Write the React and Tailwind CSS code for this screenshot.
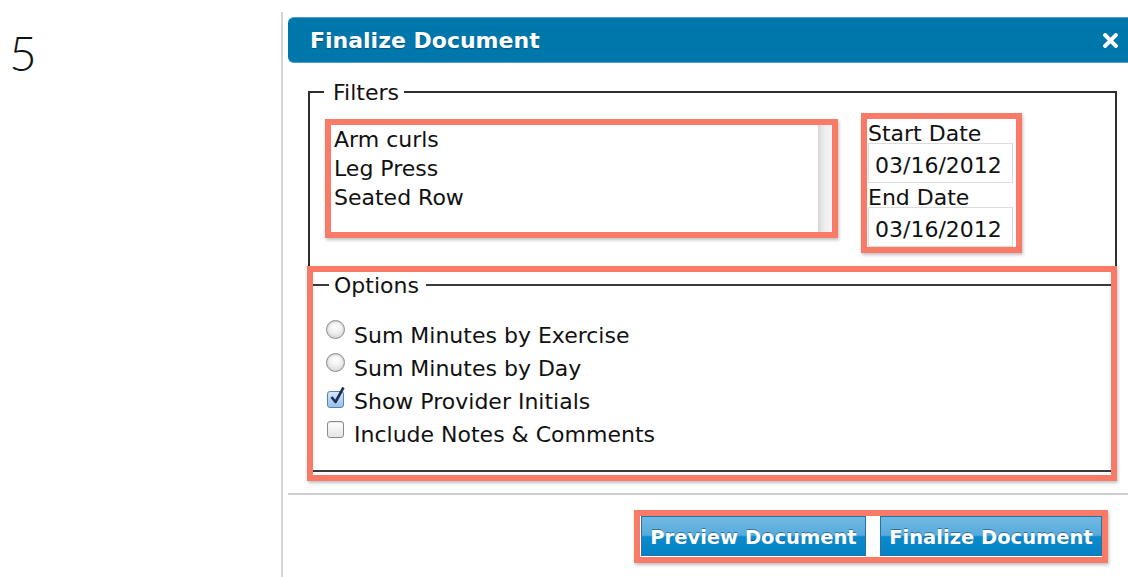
const options = [
  { type: "radio", label: "Sum Minutes by Exercise", checked: false },
  { type: "radio", label: "Sum Minutes by Day", checked: false },
  { type: "checkbox", label: "Show Provider Initials", checked: true },
  { type: "checkbox", label: "Include Notes & Comments", checked: false },
];

const exercises = ["Arm curls", "Leg Press", "Seated Row"];

const callout = "border-[6px] border-[#f97a66] shadow-[1px_2px_3px_rgba(0,0,0,0.25)]";

function Radio() {
  return (
    <span className="mt-[1px] block h-[19px] w-[19px] shrink-0 rounded-full border border-[#8c8c8c] bg-[radial-gradient(circle_at_50%_30%,#ffffff_0%,#f1f1f1_45%,#cbcbcb_100%)] shadow-[inset_0_1px_2px_rgba(0,0,0,0.18)]" />
  );
}

function Checkbox({ checked }) {
  if (!checked) {
    return (
      <span className="mt-[3px] block h-[17px] w-[17px] shrink-0 rounded-[3px] border border-[#8a8a8a] bg-[linear-gradient(to_bottom,#ffffff,#e4e4e4)] shadow-[inset_0_1px_1px_rgba(0,0,0,0.1)]" />
    );
  }
  return (
    <span className="relative mt-[6px] block h-[17px] w-[17px] shrink-0 rounded-[3px] border border-[#5a81ad] bg-[linear-gradient(to_bottom,#d6e8f9,#97c0ea)]">
      <svg className="absolute -top-[6px] left-[1px]" width="17" height="19" viewBox="0 0 17 19">
        <path d="M2.5 11 L6.5 16 L14.5 1.5" fill="none" stroke="#1b2e55" strokeWidth="2.6" strokeLinejoin="round" />
      </svg>
    </span>
  );
}

function DateField({ label, value }) {
  return (
    <div>
      <div className="h-[24px] pl-[1px] pt-[2px] leading-[26px]">{label}</div>
      <div className="ml-[1px] h-[40px] w-[145px] border border-[#dcdcdc] pl-[6px] pt-[3px] leading-[38px]">{value}</div>
    </div>
  );
}

function BlueButton({ children, width }) {
  return (
    <button
      className={`${width} h-[40px] border border-[#1d75aa] bg-[linear-gradient(to_bottom,#72b9e3_0%,#56abdc_48%,#0c8acb_52%,#0383c5_100%)] pt-[3px] text-center text-[19.5px] font-bold text-white [text-shadow:0_-1px_0_rgba(0,0,0,0.35)]`}
    >
      {children}
    </button>
  );
}

export default function App() {
  return (
    <div className="flex h-[577px] w-[1128px] overflow-hidden bg-white font-['DejaVu_Sans',sans-serif] text-[22px] text-[#111]">
      <div className="w-[281px] shrink-0 pl-[9px] pt-[29px] font-['Lato',sans-serif] text-[48px] font-light leading-none">
        5
      </div>

      <div className="mt-[12px] flex-1 border-l-2 border-[#d4d4d4] pl-[5px]">
        {/* title bar */}
        <div className="mt-[5px] flex h-[46px] items-center justify-between rounded-l-[6px] border-y border-[#4a9fc8] bg-[#0077aa] pl-[22px] pr-[10px]">
          <span className="font-bold text-white [text-shadow:0_1px_1px_rgba(0,0,0,0.3)]">Finalize Document</span>
          <svg width="15" height="15" viewBox="0 0 15 15">
            <path d="M2.2 2.2 L12.8 12.8 M12.8 2.2 L2.2 12.8" stroke="#fff" strokeWidth="4" strokeLinecap="square" />
          </svg>
        </div>

        <div className="pl-[19px] pr-[11px]">
          <fieldset className="ml-[1px] mt-[16px] border-2 border-b-0 border-[#2e2e2e] pb-[13px]">
            <legend className="ml-[14px] pl-[9px] pr-[5px] pt-[2px] leading-[24px]">Filters</legend>
            <div className="flex items-start">
              <div className={`ml-[15px] mt-[14px] flex h-[119px] w-[513px] ${callout}`}>
                <ul className="flex-1 pl-[3px] leading-[29px]">
                  {exercises.map((name) => (
                    <li key={name}>{name}</li>
                  ))}
                </ul>
                <div className="w-[14px] bg-[linear-gradient(to_right,#d6d6d6,#ececec_40%,#f5f5f5)]" />
              </div>
              <div className={`ml-[23px] mt-[8px] h-[140px] w-[161px] ${callout}`}>
                <DateField label="Start Date" value="03/16/2012" />
                <DateField label="End Date" value="03/16/2012" />
              </div>
            </div>
          </fieldset>

          <div className={`h-[215px] ${callout}`}>
            <fieldset className="h-[200px] border-y-2 border-[#3a3a3a]">
              <legend className="ml-[16px] pl-[5px] pr-[7px] pt-[2px] leading-[24px]">Options</legend>
              <div className="mt-[21px] pl-[13px]">
                {options.map((opt) => (
                  <label key={opt.label} className="flex h-[33px] items-start">
                    <span className="flex w-[19px] justify-center">
                      {opt.type === "radio" ? <Radio /> : <Checkbox checked={opt.checked} />}
                    </span>
                    <span className="ml-[9px] leading-[33px]">{opt.label}</span>
                  </label>
                ))}
              </div>
            </fieldset>
          </div>
        </div>

        <div className="mt-[12px] h-[2px] bg-[#cfcfcf]" />

        <div className="mt-[15px] flex justify-end pr-[20px]">
          <div className={`flex gap-[14px] pb-[1px] pl-[1px] ${callout}`}>
            <BlueButton width="w-[225px]">Preview Document</BlueButton>
            <BlueButton width="w-[222px]">Finalize Document</BlueButton>
          </div>
        </div>
      </div>
    </div>
  );
}
